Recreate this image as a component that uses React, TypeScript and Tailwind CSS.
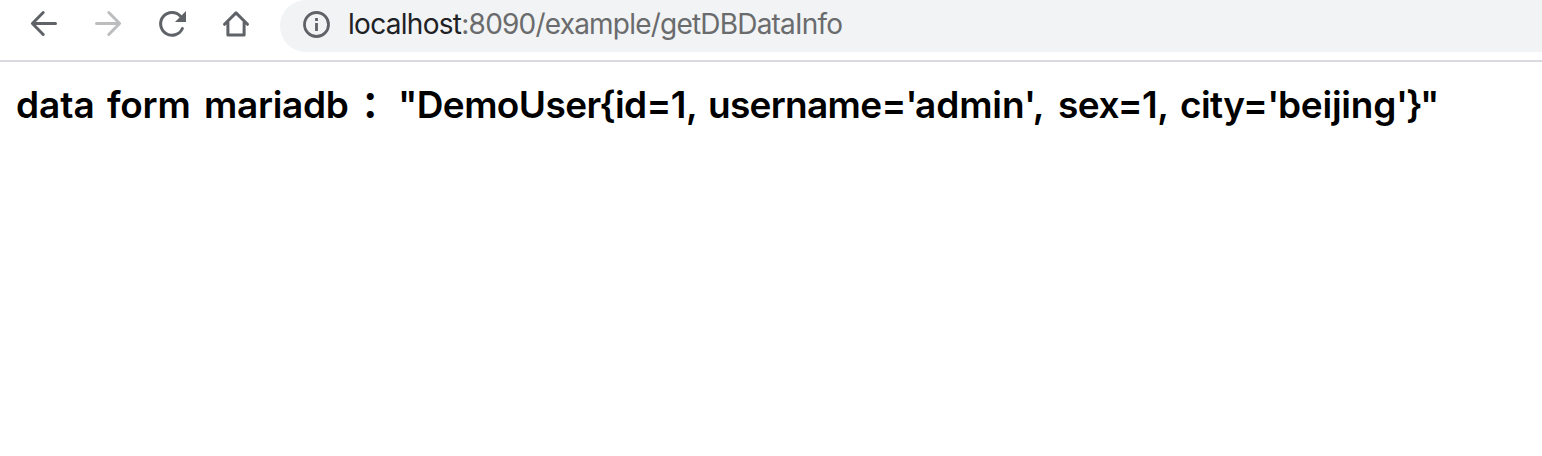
import React from "react";

const url = { host: "localhost", port: ":8090", path: "/example/getDBDataInfo" };

const words: { text: string; className: string }[] = [
  { text: "data", className: "w-[91px]" },
  { text: "form", className: "w-[97px] tracking-[-0.2px]" },
  { text: "mariadb", className: "w-[157px] tracking-[-0.3px]" },
  { text: "：", className: "w-[37px]" },
  { text: '"DemoUser', className: "w-[203px] tracking-[-0.6px]" },
  { text: "{", className: "w-[14px] -indent-[2px]" },
  { text: "id=1,", className: "w-[93px] tracking-[-0.6px]" },
  { text: "username='", className: "w-[207px] tracking-[-0.7px]" },
  { text: "admin',", className: "w-[143px] tracking-[-0.1px]" },
  { text: "sex=1,", className: "w-[122px] tracking-[-0.5px]" },
  { text: "city='", className: "w-[98px] tracking-[-0.6px]" },
  { text: "beijing'", className: "w-[130px] tracking-[-0.25px]" },
  { text: "}", className: "w-[12px] -indent-[2px]" },
  { text: "\"", className: "w-[20px]" },
];

function NavIcon({ children, className }: { children: React.ReactNode; className: string }) {
  return (
    <svg width="32" height="32" viewBox="0 0 32 32" fill="none" stroke="currentColor" strokeWidth="3" strokeLinecap="round" strokeLinejoin="round" className={className}>
      {children}
    </svg>
  );
}

function Toolbar() {
  return (
    <header className="flex h-[62px] items-start border-b-2 border-[#dadae0] bg-white pl-7">
      <nav className="mt-2 flex w-[252px] shrink-0 gap-8">
        <NavIcon className="text-[#5f6368]">
          <path d="M27.5 15.5H4.5M15.2 4.5L4.4 15.5L15.2 26.5" />
        </NavIcon>
        <NavIcon className="text-[#bcbdbf]">
          <path d="M4.5 15.5H27.5M16.8 4.5L27.6 15.5L16.8 26.5" />
        </NavIcon>
        <NavIcon className="text-[#5f6368]">
          <path d="M24.5 8.2A11.4 11.4 0 1 0 26.4 20.5" />
          <path d="M30 3V14H19Z" fill="currentColor" stroke="none" />
        </NavIcon>
        <NavIcon className="text-[#5f6368]">
          <path d="M4.5 16.3L16 4.9L27.5 16.3M7.9 14V27H24.1V14" />
        </NavIcon>
      </nav>
      <div className="flex h-[52px] min-w-0 flex-1 rounded-bl-[28px] rounded-tl-[28px] bg-[#f1f3f4] pl-[22px]">
        <svg width="28" height="28" viewBox="0 0 28 28" fill="none" stroke="#5f6368" strokeWidth="2.8" className="mt-[10px] shrink-0">
          <circle cx="14.5" cy="14.5" r="12" />
          <path d="M14.5 13V21M14.5 8V11" />
        </svg>
        <div className="ml-[18px] mt-[4px] whitespace-nowrap font-['Inter',sans-serif] text-[28px] leading-[41px] tracking-[-0.79px] text-[#6a6b6d]">
          <span className="tracking-[-0.7px] text-[#202124]">{url.host}</span>
          <span>{url.port}</span>
          <span>{url.path}</span>
        </div>
      </div>
    </header>
  );
}

export default function App() {
  return (
    <div className="h-[456px] overflow-hidden bg-white">
      <Toolbar />
      <main className="pl-4 pt-[18px]">
        <h1 className="flex whitespace-nowrap font-['Inter','Noto_Sans_CJK_SC',sans-serif] text-[37px] font-semibold leading-[50px] text-black">
          {words.map((word) => (
            <span key={word.text} className={`shrink-0 ${word.className}`}>
              {word.text}
            </span>
          ))}
        </h1>
      </main>
    </div>
  );
}
